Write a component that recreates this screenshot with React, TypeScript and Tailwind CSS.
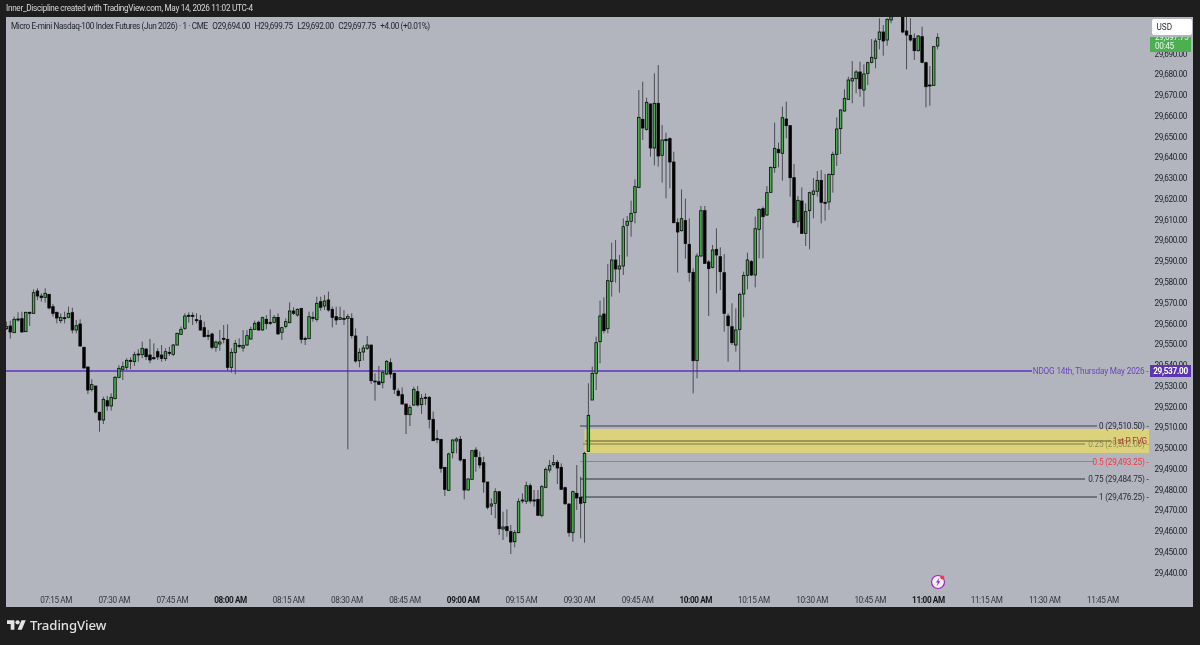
type Row = [number, number, number, number, number]

// candles read off the chart: [green, body top, body bottom, wick top, wick bottom], 3x coords with a per-segment origin
const segA: Row[] = [
  [1,140,146,125,150],[0,138,156,122,176],[1,118,158,110,158],[0,117,120,97,125],[0,116,156,95,158],[1,97,155,95,155],[0,97,100,95,138],[1,38,100,28,100],
  [0,33,48,25,60],[0,48,53,40,65],[1,40,52,25,68],[0,43,84,42,88],[0,80,100,72,110],[0,97,114,95,130],[1,112,122,100,130],[0,113,115,95,130],
  [1,100,112,80,115],[0,98,150,83,160],[1,137,150,120,160],[0,132,198,118,200],[0,202,264,200,265],[0,261,330,260,342],[1,314,328,298,335],[0,318,396,318,400],
  [0,397,420,395,455],[1,358,420,350,432],[0,362,378,348,392],[1,352,378,340,392],[1,292,356,288,358],[1,265,292,255,295],[1,260,268,245,300],[1,241,262,235,270],
  [0,241,243,232,268],[1,224,245,215,258],[0,222,225,208,245],[1,205,224,185,235],[0,207,230,205,240],[0,225,240,177,250],[0,233,235,190,240],[0,215,231,205,240],
  [0,225,235,195,245],[1,215,236,205,243],[0,217,220,200,228],[1,195,223,192,228],[1,160,195,158,197],[1,148,163,140,165],[1,108,145,100,150],[0,106,109,97,128],
  [0,106,108,97,135],[0,119,122,100,130],[0,122,150,105,152],[0,143,170,125,172],[0,166,168,150,180],[0,162,202,158,208],[1,186,202,182,215],[1,186,192,150,212],
  [0,175,178,135,190],[0,178,262,133,272],[1,217,262,205,278],[1,190,218,180,283],[0,196,199,175,205],[1,196,204,150,215],[1,167,195,150,198],[1,148,177,140,180],
  [1,130,148,122,150],[0,127,150,122,152],[1,113,150,110,152],[0,118,131,105,148],[0,127,129,88,135],[1,112,127,105,130],[0,112,162,100,163],[1,143,157,140,180],
  [1,125,139,115,145],[1,93,128,67,130],[0,93,100,82,105],[1,88,105,85,110],
]
const segB: Row[] = [
  [0,55,148,55,160],[0,145,148,140,165],[1,80,146,65,148],[0,82,85,65,95],[1,40,88,20,95],[0,35,52,20,62],[1,33,48,15,60],[0,30,60,5,65],
  [0,58,82,50,112],[0,80,90,50,105],[1,83,88,50,90],[0,85,87,60,105],[1,80,85,72,478],[0,85,137,70,145],[0,138,213,115,218],[1,187,212,175,232],
  [1,174,186,165,212],[1,165,175,138,180],[0,165,272,165,282],[0,273,275,250,332],[0,275,283,228,285],[1,248,278,240,295],[1,214,252,210,255],[0,218,252,205,265],
  [0,250,298,248,312],[0,303,316,295,320],[0,314,342,292,345],[0,342,374,342,432],[1,352,374,345,408],[1,298,345,290,348],[0,305,345,288,350],[1,325,344,312,372],
  [0,322,324,310,345],[0,322,388,318,415],[0,388,452,365,452],[0,446,448,420,460],[0,448,535,448,548],[0,532,598,532,618],[1,492,601,488,603],[1,450,488,448,505],
  [1,447,453,442,490],[0,448,510,438,515],[0,508,600,508,628],[1,567,600,565,602],[1,482,568,480,570],[0,480,500,472,545],[0,503,525,485,535],[0,518,576,500,608],
  [0,576,652,576,658],[1,642,648,625,675],[1,605,640,595,685],[0,605,716,603,735],[1,711,717,665,750],[0,710,722,658,740],[0,725,756,705,792],[1,728,755,720,772],
  [1,635,728,625,730],[0,630,632,610,640],[1,587,634,575,642],[0,587,633,580,640],[0,630,632,600,650],[0,628,676,600,678],[1,590,676,585,682],[1,538,592,532,595],
  [1,527,540,510,548],[1,518,524,495,530],[0,517,534,510,582],[0,532,598,520,600],[0,593,641,590,645],[0,642,728,640,740],[1,605,728,602,755],[0,610,624,525,660],
  [0,622,640,560,745],[1,490,638,485,758],[1,376,484,280,486],
]
const segC: Row[] = [
  [1,940,1020,920,1020],[1,848,940,830,990],[1,768,845,722,910],[0,762,812,712,820],[1,662,806,612,820],[1,600,664,548,710],[0,600,627,540,668],[1,618,627,585,698],
  [1,500,618,475,645],[1,484,496,468,590],[1,460,484,422,530],[1,380,458,358,490],[1,172,382,90,385],[0,178,204,65,240],[1,127,208,113,212],[0,132,264,130,290],
  [1,130,264,40,316],[0,130,288,15,320],[1,240,286,195,368],[0,238,242,218,415],[0,236,306,232,385],[0,306,488,275,490],[0,488,516,475,638],[1,476,512,388,515],
  [0,482,550,416,596],[0,553,637,475,665],[0,637,902,625,1000],[1,588,902,580,955],[1,452,588,438,590],[0,452,610,438,612],[0,606,626,600,768],[1,570,622,555,625],
  [0,568,585,505,700],[0,590,635,562,690],[0,638,760,582,815],[0,768,797,760,905],[0,800,848,730,855],[1,810,855,745,875],[1,703,808,698,932],[1,646,702,635,772],
  [1,600,646,578,688],[0,605,645,600,648],[1,506,645,470,682],[1,448,508,445,595],[0,446,470,440,595],
]
const segD: Row[] = [
  [1,548,615,528,618],[1,472,547,470,548],[1,415,473,338,488],[0,418,428,398,472],[1,323,430,290,512],[0,327,347,275,385],[0,347,503,345,560],[0,503,638,462,640],
  [1,571,634,558,652],[0,573,670,532,672],[1,605,670,580,708],[1,548,602,545,718],[1,543,553,504,625],[1,511,544,483,560],[0,511,577,480,640],[0,577,579,492,632],
  [1,493,576,490,600],[1,433,494,425,548],[1,357,433,322,468],[1,300,356,298,432],[1,265,303,238,305],[1,210,268,200,270],[1,205,213,153,280],[1,186,206,180,250],
  [0,186,236,155,260],[1,192,240,163,290],[1,158,190,155,225],[1,142,157,87,160],[1,93,145,85,175],[1,66,88,25,118],[0,66,93,45,137],[1,28,90,25,107],
  [1,20,30,0,40],[1,-60,-10,-70,-5],[1,-90,-60,-95,-40],[0,-60,66,-70,70],[0,63,75,20,178],[0,76,90,25,95],[0,85,122,70,150],[1,78,122,75,125],
  [0,80,157,50,160],[0,158,230,155,292],[0,225,228,168,287],[1,110,226,108,228],[1,83,108,70,118],
]

const candles = [
  ...segA.map((r) => [280, ...r]),
  ...segB.map((r) => [290, ...r]),
  ...segC.map((r) => [60, ...r]),
  ...segD.map((r) => [10, ...r]),
].map(([y0, green, top, bot, hi, lo], k) => ({
  x: 6.4 + 3.88 * k,
  green: green === 1,
  top: y0 + top / 3,
  bot: y0 + bot / 3,
  hi: y0 + hi / 3,
  lo: y0 + lo / 3,
}))

const times = [
  '07:15 AM', '07:30 AM', '07:45 AM', '08:00 AM', '08:15 AM', '08:30 AM', '08:45 AM', '09:00 AM', '09:15 AM', '09:30 AM',
  '09:45 AM', '10:00 AM', '10:15 AM', '10:30 AM', '10:45 AM', '11:00 AM', '11:15 AM', '11:30 AM', '11:45 AM',
]

const prices = [
  '29,690.00', '29,680.00', '29,670.00', '29,660.00', '29,650.00', '29,640.00', '29,630.00', '29,620.00', '29,610.00',
  '29,600.00', '29,590.00', '29,580.00', '29,570.00', '29,560.00', '29,550.00', '29,540.00', '29,530.00', '29,520.00',
  '29,510.00', '29,500.00', '29,490.00', '29,480.00', '29,470.00', '29,460.00', '29,450.00', '29,440.00',
]

const fibs = [
  { y: 426, from: 580, to: 1097, color: '#3c3f47', label: '0 (29,510.50) -', text: '#2a2e39' },
  { y: 444, from: 583, to: 1085, color: '#7d7a45', label: '0.25 (29,502.00) -', text: '#8f8b4e' },
  { y: 461.5, from: 580, to: 1093, color: '#e0626c', label: '0.5 (29,493.25) -', text: '#f23645' },
  { y: 479, from: 580, to: 1085, color: '#2f3238', label: '0.75 (29,484.75) -', text: '#2a2e39' },
  { y: 497, from: 580, to: 1097, color: '#2f3238', label: '1 (29,476.25) -', text: '#2a2e39' },
]

function ChartDrawing() {
  return (
    <svg className="absolute inset-0" width="1187" height="590" viewBox="6 17 1187 590">
      <rect x="584.5" y="429" width="564.5" height="24" fill="#ddd27c" />
      {fibs.map((f) => (
        <line key={f.y} x1={f.from} x2={f.to} y1={f.y} y2={f.y} stroke={f.color} strokeWidth="1" />
      ))}
      <line x1="585" x2="1111" y1="441" y2="441" stroke="#5e5b38" strokeWidth="1.2" />
      <line x1="6" x2="1032" y1="371" y2="371" stroke="#6231c4" strokeWidth="1.4" />
      {candles.map((c, i) => (
        <g key={i}>
          <line x1={c.x} x2={c.x} y1={c.hi} y2={c.lo} stroke="#3f4147" strokeWidth="0.9" />
          <rect
            x={c.x - 1.25}
            y={c.top}
            width="2.5"
            height={Math.max(c.bot - c.top, 1)}
            fill={c.green ? '#43b04a' : '#000000'}
            stroke="#0b0b0b"
            strokeWidth="0.8"
          />
        </g>
      ))}
      <g fontFamily="Roboto, sans-serif" fontSize="8.2" textAnchor="end" letterSpacing="-0.2">
        {fibs.map((f) => (
          <text key={f.y} x="1148.5" y={f.y + 3} fill={f.text}>{f.label}</text>
        ))}
        <text x="1147" y="444" fill="#a63a3c">1st P FVG</text>
        <text x="1148.5" y="374" fill="#6b45bd" letterSpacing="-0.15">NDOG 14th, Thursday May 2026 -</text>
      </g>
      <circle cx="938" cy="582" r="6.5" fill="#f4eef8" stroke="#9c27b0" strokeWidth="1.2" />
      <path d="M939.5 577.5l-3.5 5h2l-1.5 4 3.8-5.2h-2z" fill="#9c27b0" />
      <circle cx="942.3" cy="577.5" r="2" fill="#f23645" />
    </svg>
  )
}

export default function App() {
  return (
    <div className="w-[1200px] h-[645px] overflow-hidden bg-[#1e1e1e] flex flex-col font-['Roboto',sans-serif] blur-[0.3px]">
      <div className="h-[17px] pl-[6px] text-[8.2px] leading-[17px] tracking-[-0.3px] text-[#d8d8d8] whitespace-nowrap">
        Inner_Discipline created with TradingView.com, May 14, 2026 11:02 UTC-4
      </div>

      <div className="relative ml-[6px] w-[1187px] h-[590px] bg-[#b2b5be] flex overflow-hidden">
        <ChartDrawing />

        <div className="relative flex-1 min-w-0 flex flex-col">
          <div className="pl-[5px] pt-[3px] flex gap-[4.5px] text-[8.2px] leading-[12px] tracking-[-0.38px] text-[#23262e] whitespace-nowrap">
            <span>Micro E-mini Nasdaq-100 Index Futures (Jun 2026) · 1 · CME</span>
            <span>O29,694.00</span>
            <span>H29,699.75</span>
            <span>L29,692.00</span>
            <span>C29,697.75</span>
            <span>+4.00 (+0.01%)</span>
          </div>
          <div className="mt-auto pl-[21px] pb-[1px] flex text-[8.2px] leading-[12px] tracking-[-0.4px] text-[#33363f]">
            {times.map((t) => (
              <span key={t} className={`w-[58.17px] shrink-0 text-center ${t.endsWith(':00 AM') ? 'font-bold text-[#16181d]' : ''}`}>
                {t}
              </span>
            ))}
          </div>
        </div>

        <div className="relative w-[44px] pt-[26.6px] pr-[6px] flex flex-col text-[8.2px] tracking-[-0.4px] text-[#23262e] text-right">
          {prices.map((p) => (
            <span key={p} className="h-[20.77px] leading-[20.77px]">{p}</span>
          ))}
        </div>

        <div className="absolute right-[2px] top-[20px] w-[41px] h-[15px] overflow-hidden bg-[#4caf50] text-[#e8f5e9] text-[8.2px] tracking-[-0.3px] leading-[9px] pl-[5px]">
          <div className="-mt-[4px]">29,697.75</div>
          <div>00:45</div>
        </div>
        <div className="absolute right-[1.5px] top-[2px] w-[40px] h-[16px] rounded-[2px] bg-white text-[#2a2e39] text-[8.2px] leading-[16px] pl-[5px]">
          USD
        </div>
        <div className="absolute right-[2px] top-[348px] w-[41px] h-[12px] bg-[#5e35b1] text-white font-bold text-[8.2px] tracking-[-0.3px] leading-[12px] text-center">
          29,537.00
        </div>
      </div>

      <div className="flex-1 pl-[7px] flex items-center gap-[4px] pb-[1px]">
        <svg width="19" height="15" viewBox="0 0 36 28">
          <path d="M14 22H7V11H0V4h14v18zM28 22h-8l7.5-18h8L28 22z" fill="#e4e4e4" />
          <circle cx="20" cy="8" r="4" fill="#e4e4e4" />
        </svg>
        <span className="text-[13.2px] font-medium font-['Noto_Sans',sans-serif] text-[#e0e0e0] tracking-[-0.1px]">TradingView</span>
      </div>
    </div>
  )
}
